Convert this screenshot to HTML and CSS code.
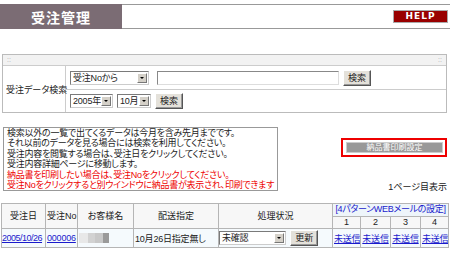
FILE: index.html
```html
<!DOCTYPE html>
<html lang="ja">
<head>
  <meta charset="UTF-8" />
  <title>受注管理</title>
  <link rel="stylesheet" href="styles.css">
</head>
<body>

  <div class="head">
    <div class="title">受注管理</div>
    <div class="head-rest">
      <span class="help">HELP</span>
    </div>
  </div>

  <div class="panel">
    <div class="panel-bar"><span>::</span><span>::</span></div>
    <div class="panel-body">
      <div class="label">受注データ検索</div>
      <div class="fields">
        <div class="row">
          <span class="sel w-type">受注Noから<i class="arrow"></i></span>
          <span class="text-input"></span>
          <button class="btn">検索</button>
        </div>
        <div class="row">
          <span class="sel w-year">2005年<i class="arrow"></i></span>
          <span class="sel w-month">10月<i class="arrow"></i></span>
          <button class="btn">検索</button>
        </div>
      </div>
    </div>
  </div>

  <div class="middle">
    <div class="info">
      <p>検索以外の一覧で出てくるデータは今月を含み先月までです。</p>
      <p>それ以前のデータを見る場合には検索を利用してください。</p>
      <p>受注内容を閲覧する場合は、受注日をクリックしてください。</p>
      <p>受注内容詳細ページに移動します。</p>
      <p class="red">納品書を印刷したい場合は、受注Noをクリックしてください。</p>
      <p class="red">受注Noをクリックすると別ウインドウに納品書が表示され、印刷できます</p>
    </div>
    <div class="side">
      <div class="print-frame"><span class="print-btn">納品書印刷設定</span></div>
      <div class="page-no">1ページ目表示</div>
    </div>
  </div>

  <table class="list">
    <colgroup>
      <col class="c-date">
      <col class="c-no">
      <col class="c-name">
      <col class="c-ship">
      <col class="c-state">
      <col class="c-m1">
      <col class="c-m2">
      <col class="c-m2">
      <col class="c-m1">
    </colgroup>
    <tr>
      <th rowspan="2">受注日</th>
      <th rowspan="2">受注No</th>
      <th rowspan="2">お客様名</th>
      <th rowspan="2">配送指定</th>
      <th rowspan="2">処理状況</th>
      <th colspan="4" class="mail-head"><a href="#">[4パターンWEBメールの設定]</a></th>
    </tr>
    <tr>
      <th class="num">1</th>
      <th class="num">2</th>
      <th class="num">3</th>
      <th class="num">4</th>
    </tr>
    <tr class="data">
      <td class="date"><a href="#">2005/10/26</a></td>
      <td><a href="#">000006</a></td>
      <td><span class="blur"></span></td>
      <td>10月26日指定無し</td>
      <td class="state">
        <span class="sel w-state">未確認<i class="arrow"></i></span>
        <button class="btn">更新</button>
      </td>
      <td class="mail"><a href="#">未送信</a></td>
      <td class="mail"><a href="#">未送信</a></td>
      <td class="mail"><a href="#">未送信</a></td>
      <td class="mail"><a href="#">未送信</a></td>
    </tr>
  </table>

</body>
</html>
```

FILE: styles.css
```css
* {
  margin: 0;
  padding: 0;
  box-sizing: border-box;
}

body {
  width: 450px;
  font-family: "Liberation Sans", "Noto Sans CJK JP", sans-serif;
  font-size: 9px;
  font-feature-settings: "palt";
  color: #222;
  background: #fff;
  white-space: nowrap;
}

/* header */
.head {
  display: flex;
  height: 25px;
  margin-top: 4px;
}

.title {
  width: 122px;
  background: #7b6c74;
  color: #fff;
  font-family: "Noto Sans CJK JP", sans-serif;
  font-size: 14px;
  font-weight: bold;
  letter-spacing: 1px;
  display: flex;
  align-items: center;
  justify-content: center;
}

.head-rest {
  flex: 1;
  border-top: 1px solid #999;
  border-bottom: 1px solid #999;
  display: flex;
  justify-content: flex-end;
  align-items: flex-start;
  padding: 5px 2px 0 0;
}

.help {
  width: 55px;
  height: 13px;
  background: #990000;
  border: 1px solid #aaa;
  color: #fff;
  font-family: "DejaVu Sans", sans-serif;
  font-size: 9px;
  font-weight: bold;
  letter-spacing: 1px;
  line-height: 11px;
  text-align: center;
}

/* search panel */
.panel {
  margin: 25px 3px 0 2px;
  border: 1px solid #bbb;
}

.panel-bar {
  height: 11px;
  display: flex;
  justify-content: space-between;
  padding: 0 4px;
  color: #aaa;
  font-size: 7px;
  line-height: 10px;
  background-color: #f2f2f2;
  background-image: radial-gradient(#dcdcdc 0.6px, transparent 0.7px);
  background-size: 2px 2px;
  border-bottom: 1px solid #ccc;
}

.panel-body {
  display: flex;
}

.label {
  width: 63px;
  border-right: 1px solid #ccc;
  display: flex;
  align-items: center;
  padding-left: 3px;
}

.fields {
  flex: 1;
}

.row {
  height: 23px;
  display: flex;
  align-items: center;
  gap: 4px;
  padding-left: 4px;
}

.row + .row {
  border-top: 1px solid #ccc;
}

.sel {
  height: 14px;
  display: inline-flex;
  align-items: center;
  justify-content: space-between;
  border: 1px solid #7a7a7a;
  border-right-color: #ccc;
  border-bottom-color: #ccc;
  padding: 0 1px 0 2px;
  background: #fff;
  line-height: 12px;
  letter-spacing: -0.2px;
}

.arrow {
  width: 10px;
  height: 10px;
  background: #d4d0c8;
  border: 1px solid;
  border-color: #fff #777 #777 #fff;
  position: relative;
}

.arrow::after {
  content: "";
  position: absolute;
  left: 2px;
  top: 3px;
  border-left: 2px solid transparent;
  border-right: 2px solid transparent;
  border-top: 2px solid #000;
}

.w-type { width: 79px; }
.w-year { width: 43px; }
.w-month { width: 34px; }
.w-state { width: 67px; }

.text-input {
  width: 182px;
  height: 14px;
  margin-left: 4px;
  border: 1px solid #888;
  border-right-color: #ddd;
  border-bottom-color: #ddd;
  background: #fff;
}

.btn {
  height: 16px;
  padding: 0 4px;
  font-family: "Noto Sans CJK JP", sans-serif;
  font-size: 9px;
  line-height: 12px;
  color: #222;
  background: #e4e1da;
  border: 1px solid;
  border-color: #fff #555 #555 #fff;
  box-shadow: inset -1px -1px 0 #999;
}

/* info */
.middle {
  display: flex;
  margin-top: 14px;
  height: 64px;
}

.info {
  width: 275px;
  margin-left: 3px;
  border: 1px solid #999;
  padding: 0 3px;
  line-height: 10.4px;
  letter-spacing: -0.25px;
  overflow: hidden;
}

.red {
  color: #ee0000;
}

.side {
  flex: 1;
  display: flex;
  flex-direction: column;
  align-items: flex-end;
  justify-content: space-between;
  padding: 11px 3px 0 0;
}

.print-frame {
  width: 106px;
  height: 19px;
  border: 2px solid #e00;
  padding: 2px 2px 2px 3px;
}

.print-btn {
  display: block;
  height: 11px;
  background: #999;
  border: 1px solid #ccc;
  color: #fff;
  text-align: center;
  line-height: 9px;
  font-size: 8px;
}

.page-no {
  line-height: 12px;
  margin-bottom: -2px;
}

/* list */
.list {
  margin: 12px 0 0 1px;
  width: 448px;
  table-layout: fixed;
  border-collapse: collapse;
}

.c-date { width: 44px; }
.c-no { width: 32px; }
.c-name { width: 56px; }
.c-ship { width: 85px; }
.c-state { width: 114px; }
.c-m1 { width: 28px; }
.c-m2 { width: 30px; }

.list th,
.list td {
  border: 1px solid #b5b5b5;
  font-weight: normal;
  padding: 0 1px;
  overflow: hidden;
}

.list th {
  background: #f7f7f7;
  height: 12px;
  line-height: 11px;
}

.list th[rowspan] {
  height: 25px;
}

.mail-head {
  background: #eef5fa !important;
  letter-spacing: -0.3px;
}

.list a {
  color: #1a1acc;
}

.mail-head a {
  text-decoration: none;
}

.data td {
  height: 19px;
  background: #f5fafd;
  letter-spacing: -0.2px;
}

.list .date {
  padding: 0;
  letter-spacing: -0.5px;
}

.state {
  padding: 0 !important;
}

.state .btn {
  margin-left: 2px;
  vertical-align: middle;
}

.state .sel {
  vertical-align: middle;
}

.mail {
  text-align: center;
}

.blur {
  display: inline-block;
  width: 30px;
  height: 10px;
  vertical-align: middle;
  background: linear-gradient(to right, #e8e8e8 0 30%, #d2d2d2 30% 55%, #c8c8c8 55% 80%, #9a9a9a 80%);
}
```
